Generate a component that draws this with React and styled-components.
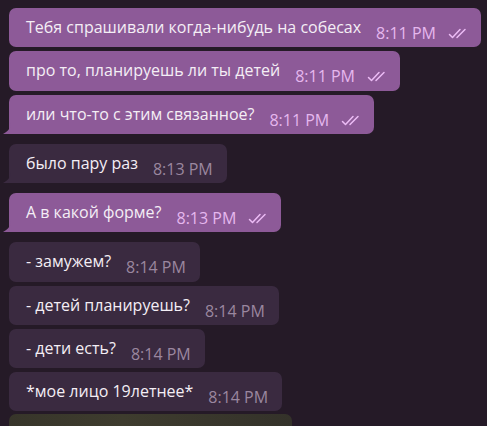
import React from 'react'
import styled, { createGlobalStyle } from 'styled-components'

const GlobalStyle = createGlobalStyle`
    html, body {
        margin: 0;
        padding: 0;
        background: #251a27;
        overflow: hidden;
    }
    body {
        font-family: "Open Sans", "Noto Sans", sans-serif;
    }
`

const messages = [
    { text: 'Тебя спрашивали когда-нибудь на собесах', time: '8:11 PM', out: true },
    { text: 'про то, планируешь ли ты детей', time: '8:11 PM', out: true },
    { text: 'или что-то с этим связанное?', time: '8:11 PM', out: true, tail: true },
    { text: 'было пару раз', time: '8:13 PM', tail: true },
    { text: 'А в какой форме?', time: '8:13 PM', out: true, tail: true },
    { text: '- замужем?', time: '8:14 PM' },
    { text: '- детей планируешь?', time: '8:14 PM' },
    { text: '- дети есть?', time: '8:14 PM' },
    { text: '*мое лицо 19летнее*', time: '8:14 PM' },
]

function Checks() {
    return (
        <svg width="22" height="11" viewBox="0 0 22 11" fill="none">
            <path d="M1.5 6.5 L4.5 9.5 L12 1.5" stroke="currentColor" strokeWidth="1.5" strokeLinecap="round" strokeLinejoin="round" />
            <path d="M9 9.5 L17 1.5" stroke="currentColor" strokeWidth="1.5" strokeLinecap="round" />
        </svg>
    )
}

function Tail({ color }) {
    return (
        <TailSvg width="8" height="12" viewBox="0 0 8 12">
            <path d="M8 0 C8 5 6 9 0 12 L8 12 Z" fill={color} />
        </TailSvg>
    )
}

function App() {
    return (
        <>
            <GlobalStyle />
            <Chat>
                {messages.map((m, i) => {
                    const prev = messages[i - 1]
                    const newGroup = prev && prev.out !== m.out
                    return (
                        <Bubble key={i} $out={m.out} $tail={m.tail} $gap={i === 0 ? 0 : newGroup ? 10 : 4}>
                            {m.tail && <Tail color={m.out ? '#8d5a98' : '#3a2a40'} />}
                            <Text>{m.text}</Text>
                            <Meta $out={m.out}>
                                <span>{m.time}</span>
                                {m.out && <Checks />}
                            </Meta>
                        </Bubble>
                    )
                })}
                <Preview />
            </Chat>
        </>
    )
}

const Chat = styled.div`
    display: flex;
    flex-direction: column;
    align-items: flex-start;
    padding: 8px 0 0 9px;
    height: 426px;
    box-sizing: border-box;
`

const Bubble = styled.div`
    position: relative;
    display: flex;
    align-items: flex-start;
    height: 40px;
    box-sizing: border-box;
    margin-top: ${p => p.$gap}px;
    padding: 0 ${p => (p.$out ? 11 : 14)}px 0 17px;
    border-radius: 7px;
    border-bottom-left-radius: ${p => (p.$tail ? 0 : 7)}px;
    background: ${p => (p.$out ? '#8d5a98' : '#3a2a40')};
`

const TailSvg = styled.svg`
    position: absolute;
    left: -6px;
    bottom: 0;
`

const Text = styled.div`
    color: #f4eef5;
    font-size: 16px;
    line-height: 22px;
    padding-top: 8px;
    white-space: nowrap;
`

const Meta = styled.div`
    display: flex;
    align-items: center;
    gap: 12px;
    margin-left: 15px;
    padding-top: 14px;
    font-size: 16px;
    line-height: 22px;
    white-space: nowrap;
    color: ${p => (p.$out ? '#e5b7ee' : '#9a879f')};
    svg {
        color: #ecbcf5;
        margin-top: 1px;
    }
`

const Preview = styled.div`
    margin-top: 3px;
    width: 283px;
    height: 12px;
    border-radius: 7px 7px 0 0;
    background: linear-gradient(90deg, #37352a, #3e3c2e 40%, #34322a);
`

export default App
